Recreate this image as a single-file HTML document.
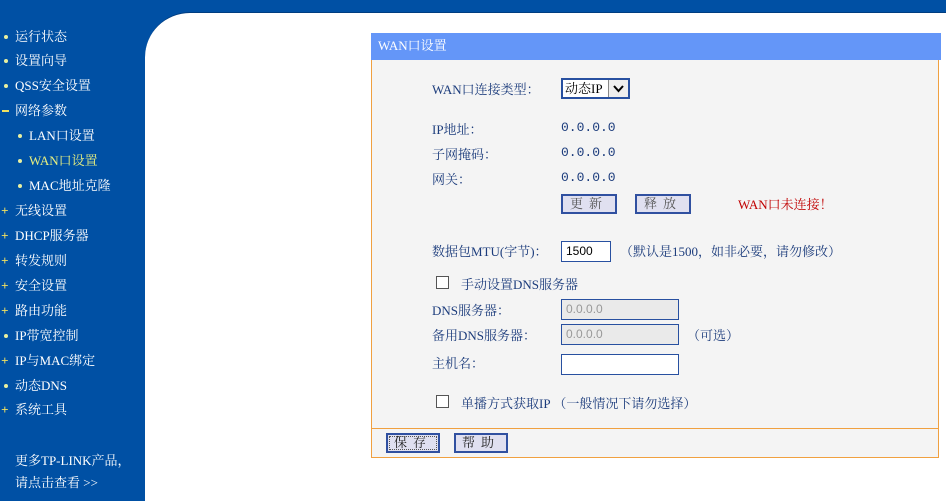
<!DOCTYPE html>
<html><head><meta charset="utf-8"><style>
body{margin:0;width:946px;height:500px;position:relative;overflow:hidden;background:#0050a4;font-family:"Liberation Serif","Noto Serif CJK SC","Noto Sans CJK SC",serif;font-size:13px}
.a{position:absolute;white-space:nowrap}
#main{left:145px;top:12px;width:801px;height:488px;background:#fff;border-top-left-radius:45px;border-top:1px solid #003d80}
.m{color:#fff;left:15px;height:20px;line-height:20px}
.s{left:29px}
.d{position:absolute;left:-11px;top:8px;width:4px;height:4px;background:#e8f0a0;border-radius:2px}
.p{position:absolute;left:-14px;top:4px;color:#f0e060;font-weight:bold;font-size:13px;line-height:12px}
.mi{position:absolute;left:-13px;top:9px;width:7px;height:2px;background:#f0e060}
#panel{left:371px;top:33px;width:568px;height:425px;background:#f4f4f4;border:1px solid #f0a040;border-top:none;box-sizing:border-box}
#hd{left:371px;top:33px;width:570px;height:27px;background:#6496f8;color:#fff;line-height:25px;text-indent:7px}
#ft{left:372px;top:428px;width:567px;height:1px;background:#f0a040}
.t{color:#1c3c7c}
.v{color:#1c3c7c;font-family:"Liberation Mono",monospace;font-size:13px}
.btn{background:#e0e0f0;border:2px solid #3050a0;box-sizing:border-box;color:#555;text-align:center;letter-spacing:6px}
.in{background:#fff;border:1px solid #2850a0;box-sizing:border-box;height:21px;line-height:19px;padding-left:4px;font-family:"Liberation Sans",sans-serif;font-size:12px}
.dis{background:#eaeaea;color:#999}
.cb{width:13px;height:13px;border:1px solid #555;background:#fff;box-sizing:border-box}
</style></head><body>
<div class="a" id="main"></div>
<div class="a m" style="top:27px"><i class="d"></i>运行状态</div>
<div class="a m" style="top:51px"><i class="d"></i>设置向导</div>
<div class="a m" style="top:76px"><i class="d"></i>QSS安全设置</div>
<div class="a m" style="top:101px"><i class="mi"></i>网络参数</div>
<div class="a m s" style="top:126px"><i class="d"></i>LAN口设置</div>
<div class="a m s" style="top:151px;color:#e8f080"><i class="d"></i>WAN口设置</div>
<div class="a m s" style="top:176px"><i class="d"></i>MAC地址克隆</div>
<div class="a m" style="top:201px"><i class="p">+</i>无线设置</div>
<div class="a m" style="top:226px"><i class="p">+</i>DHCP服务器</div>
<div class="a m" style="top:251px"><i class="p">+</i>转发规则</div>
<div class="a m" style="top:276px"><i class="p">+</i>安全设置</div>
<div class="a m" style="top:301px"><i class="p">+</i>路由功能</div>
<div class="a m" style="top:326px"><i class="d"></i>IP带宽控制</div>
<div class="a m" style="top:351px"><i class="p">+</i>IP与MAC绑定</div>
<div class="a m" style="top:376px"><i class="d"></i>动态DNS</div>
<div class="a m" style="top:400px"><i class="p">+</i>系统工具</div>
<div class="a m" style="top:451px">更多TP-LINK产品，</div>
<div class="a m" style="top:473px">请点击查看 &gt;&gt;</div>

<div class="a" id="panel"></div>
<div class="a" id="hd">WAN口设置</div>
<div class="a" id="ft"></div>

<div class="a t" style="left:432px;top:79px">WAN口连接类型：</div>
<div class="a" style="left:561px;top:78px;width:69px;height:21px;border:2px solid #2850a0;box-sizing:border-box;background:#fff;line-height:17px;padding-left:2px">动态IP<span style="position:absolute;right:0;top:0;width:19px;height:17px;border-left:1px solid #888;background:#eee"><svg width="19" height="17"><path d="M5 6 L9.5 11 L14 6" fill="none" stroke="#000" stroke-width="2"/></svg></span></div>
<div class="a t" style="left:432px;top:119px">IP地址：</div>
<div class="a v" style="left:561px;top:120px">0.0.0.0</div>
<div class="a t" style="left:432px;top:144px">子网掩码：</div>
<div class="a v" style="left:561px;top:145px">0.0.0.0</div>
<div class="a t" style="left:432px;top:169px">网关：</div>
<div class="a v" style="left:561px;top:170px">0.0.0.0</div>
<div class="a btn" style="left:561px;top:194px;width:56px;height:20px;line-height:16px">更新</div>
<div class="a btn" style="left:635px;top:194px;width:56px;height:20px;line-height:16px">释放</div>
<div class="a" style="left:738px;top:194px;color:#c00000">WAN口未连接！</div>

<div class="a t" style="left:432px;top:241px">数据包MTU(字节)：</div>
<div class="a in" style="left:561px;top:241px;width:50px">1500</div>
<div class="a t" style="left:620px;top:241px">（默认是1500，如非必要，请勿修改）</div>
<div class="a cb" style="left:436px;top:276px"></div>
<div class="a t" style="left:461px;top:274px">手动设置DNS服务器</div>
<div class="a t" style="left:432px;top:300px">DNS服务器：</div>
<div class="a in dis" style="left:561px;top:299px;width:118px">0.0.0.0</div>
<div class="a t" style="left:432px;top:325px">备用DNS服务器：</div>
<div class="a in dis" style="left:561px;top:324px;width:118px">0.0.0.0</div>
<div class="a t" style="left:687px;top:325px">（可选）</div>
<div class="a t" style="left:432px;top:353px">主机名：</div>
<div class="a in" style="left:561px;top:354px;width:118px"></div>
<div class="a cb" style="left:436px;top:395px"></div>
<div class="a t" style="left:461px;top:393px">单播方式获取IP （一般情况下请勿选择）</div>

<div class="a btn" style="left:386px;top:433px;width:54px;height:20px;line-height:16px;color:#222;outline:1px dotted #555;outline-offset:-4px">保存</div>
<div class="a btn" style="left:454px;top:433px;width:54px;height:20px;line-height:16px;color:#222">帮助</div>
</body></html>
